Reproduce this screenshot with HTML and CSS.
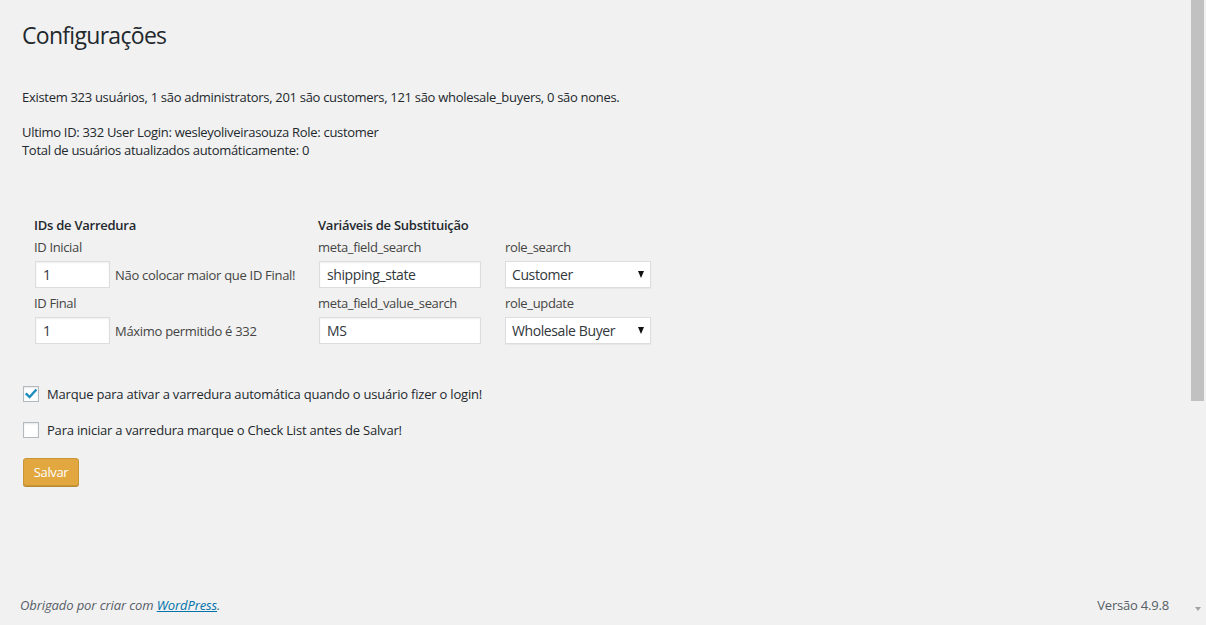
FILE: index.html
```html
<!DOCTYPE html>
<html lang="pt-BR">
<head>
<meta charset="utf-8">
<title>Configurações</title>
<link rel="stylesheet" href="styles.css">
</head>
<body>
<div class="page">
  <div class="wrap">
    <h1 class="title">Configurações</h1>
    <p class="stats">Existem 323 usuários, 1 são administrators, 201 são customers, 121 são wholesale_buyers, 0 são nones.</p>
    <p class="last">Ultimo ID: 332 User Login: wesleyoliveirasouza Role: customer<br>Total de usuários atualizados automáticamente: 0</p>

    <div class="fields">
      <div class="col col-ids">
        <div class="head">IDs de Varredura</div>
        <div class="lbl">ID Inicial</div>
        <div class="row"><span class="input small">1</span><span class="hint">Não colocar maior que ID Final!</span></div>
        <div class="lbl">ID Final</div>
        <div class="row"><span class="input small">1</span><span class="hint">Máximo permitido é 332</span></div>
      </div>
      <div class="col col-vars">
        <div class="head">Variáveis de Substituição</div>
        <div class="lbl">meta_field_search</div>
        <div class="row"><span class="input wide">shipping_state</span></div>
        <div class="lbl">meta_field_value_search</div>
        <div class="row"><span class="input wide">MS</span></div>
      </div>
      <div class="col col-roles">
        <div class="head">&nbsp;</div>
        <div class="lbl">role_search</div>
        <div class="row"><span class="select">Customer<span class="caret"></span></span></div>
        <div class="lbl">role_update</div>
        <div class="row"><span class="select">Wholesale Buyer<span class="caret"></span></span></div>
      </div>
    </div>

    <div class="check first">
      <span class="box checked"><svg viewBox="0 0 16 16" width="16" height="16"><path d="M3.6 8.2 L6.6 11.1 L12.6 4.4" fill="none" stroke="#1e8cbe" stroke-width="2.4" stroke-linecap="square"/></svg></span>
      <span class="check-text">Marque para ativar a varredura automática quando o usuário fizer o login!</span>
    </div>
    <div class="check">
      <span class="box"></span>
      <span class="check-text">Para iniciar a varredura marque o Check List antes de Salvar!</span>
    </div>
    <div class="btn">Salvar</div>
  </div>

  <div class="footer">
    <span class="thanks">Obrigado por criar com <a href="#">WordPress</a>.</span>
    <span class="version">Versão 4.9.8</span>
  </div>
</div>
<div class="scrollbar"><div class="thumb"></div><div class="arrow"></div></div>
</body>
</html>
```

FILE: styles.css
```css
html, body {
  margin: 0;
  padding: 0;
  background: #f1f1f1;
}
body {
  font-family: "Open Sans", "Noto Sans", sans-serif;
  font-size: 13px;
  color: #444;
  width: 1206px;
  height: 625px;
  overflow: hidden;
  position: relative;
}
.page {
  width: 1189px;
  height: 625px;
  display: flex;
  flex-direction: column;
}
.wrap {
  padding-left: 22px;
  flex: 1;
}
.title {
  margin: 20px 0 0;
  font-size: 23px;
  font-weight: 400;
  line-height: 30px;
  color: #23282d;
  letter-spacing: -0.7px;
}
.stats {
  margin: 38px 0 0;
  line-height: 18px;
  color: #23282d;
  letter-spacing: -0.3px;
}
.last {
  margin: 17px 0 0;
  line-height: 18px;
  color: #23282d;
  letter-spacing: -0.3px;
}
.fields {
  display: flex;
  margin-top: 55px;
  padding-left: 12px;
}
.col { display: flex; flex-direction: column; }
.col-ids { width: 284px; }
.col-vars { width: 187px; }
.col-roles { width: 150px; }
.head {
  font-weight: 600;
  color: #23282d;
  line-height: 22px;
  letter-spacing: -0.25px;
}
.lbl {
  line-height: 22px;
  letter-spacing: -0.35px;
}
.lbl + .row + .lbl { margin-top: 1px; }
.row {
  display: flex;
  align-items: center;
  margin: 3px 0;
  height: 27px;
}
.input, .select {
  box-sizing: border-box;
  height: 27px;
  background: #fff;
  border: 1px solid #ddd;
  box-shadow: inset 0 1px 2px rgba(0,0,0,0.07);
  line-height: 25px;
  padding: 0 7px;
  color: #32373c;
  font-size: 14px;
  letter-spacing: -0.4px;
}
.input.small { width: 75px; margin-left: 1px; }
.input.wide { width: 162px; margin-left: 1px; }
.select {
  width: 146px;
  position: relative;
  box-shadow: 0 1px 1px rgba(0,0,0,0.04);
  padding-left: 6px;
}
.caret {
  position: absolute;
  right: 6px;
  top: 9px;
  width: 0;
  height: 0;
  border-left: 3.5px solid transparent;
  border-right: 3.5px solid transparent;
  border-top: 7px solid #111;
}
.hint {
  margin-left: 5px;
  letter-spacing: -0.3px;
}
.check {
  display: flex;
  align-items: center;
  height: 16px;
  margin-top: 20px;
  padding-left: 1px;
  color: #23282d;
}
.check.first { margin-top: 39px; }
.box {
  box-sizing: border-box;
  width: 16px;
  height: 16px;
  border: 1px solid #b4b9be;
  background: #fff;
  box-shadow: inset 0 1px 2px rgba(0,0,0,0.1);
  position: relative;
  flex: none;
}
.box svg { position: absolute; left: -1px; top: -1px; }
.check-text {
  margin-left: 8px;
  letter-spacing: -0.2px;
}
.btn {
  margin-top: 20px;
  margin-left: 1px;
  box-sizing: border-box;
  width: 56px;
  height: 28px;
  background: #e2a73f;
  border: 1px solid #c99636;
  border-radius: 3px;
  box-shadow: 0 1px 0 #b98a30;
  color: #fff;
  text-align: center;
  line-height: 26px;
  font-size: 13px;
  letter-spacing: -0.4px;
}
.footer {
  display: flex;
  justify-content: space-between;
  padding: 0 20px 0 20px;
  height: 20px;
  line-height: 20px;
  margin-bottom: 10px;
  color: #555d66;
}
.thanks {
  font-style: italic;
  letter-spacing: -0.1px;
}
.thanks a { color: #0073aa; }
.version { letter-spacing: -0.2px; }
.scrollbar {
  position: absolute;
  right: 0;
  top: 0;
  width: 17px;
  height: 625px;
  background: #f1f1f1;
}
.thumb {
  position: absolute;
  left: 2px;
  top: 0;
  width: 13px;
  height: 401px;
  background: #c1c1c1;
}
.arrow {
  position: absolute;
  left: 6px;
  top: 607px;
  width: 0;
  height: 0;
  border-left: 3px solid transparent;
  border-right: 3px solid transparent;
  border-top: 4px solid #a3a3a3;
}
```
